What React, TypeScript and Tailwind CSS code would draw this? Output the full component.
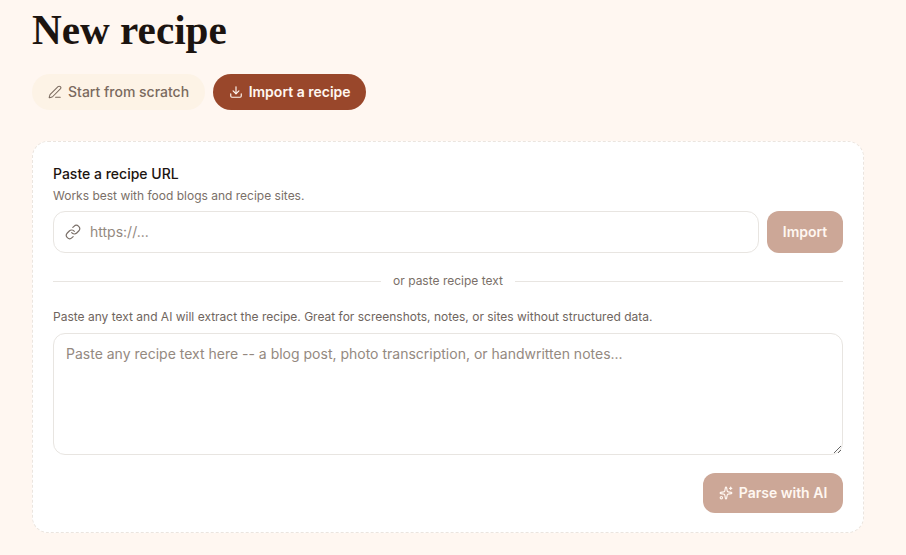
import React from 'react';
import { PenLine, Download, Link, Sparkles } from 'lucide-react';

const App: React.FC = () => {
  return (
    <div className="h-[555px] overflow-hidden bg-[#fff7f1] px-8 pt-[8px] font-['Inter',sans-serif]">
      <h1 className="text-[41.2px] leading-[44px] font-bold text-[#1c1410] font-['Liberation_Serif',serif]">New recipe</h1>

      {/* Mode switch */}
      <div className="mt-[22px] flex gap-2">
        <button className="flex h-9 items-center gap-1.5 rounded-full bg-[#fdf3e6] px-4 text-sm font-medium text-[#7a6a5e]">
          <PenLine size={14} strokeWidth={1.75} />
          Start from scratch
        </button>
        <button className="flex h-9 w-[153px] items-center justify-center gap-1.5 rounded-full bg-[#99472b] text-sm font-semibold text-[#fff7f1]">
          <Download size={14} strokeWidth={2} />
          Import a recipe
        </button>
      </div>

      <div className="mt-[31px] h-[392px] w-[832px] rounded-2xl border border-dashed border-[#ebe5df] bg-white px-5 pt-[22px]">
        <label className="block text-sm leading-5 font-medium text-[#1c1410]">Paste a recipe URL</label>
        <p className="mt-1 text-xs leading-4 text-[#7a6f68]">Works best with food blogs and recipe sites.</p>

        <div className="mt-[7px] flex gap-2">
          <div className="flex h-[42px] flex-1 items-center gap-[9px] rounded-xl border border-[#e8e5e1] bg-white px-[11px]">
            <Link size={16} strokeWidth={1.75} className="text-[#7a6f68]" />
            <input className="flex-1 text-sm outline-none placeholder:text-[#94897f]" placeholder="https://..." />
          </div>
          <button className="h-[42px] w-[76px] rounded-xl bg-[#cca797] text-sm font-semibold text-[#fff7f1]">Import</button>
        </div>

        <div className="mt-[20px] flex items-center gap-3">
          <div className="h-px flex-1 bg-[#e8e5e1]"></div>
          <span className="text-xs leading-4 text-[#7a6f68]">or paste recipe text</span>
          <div className="h-px flex-1 bg-[#e8e5e1]"></div>
        </div>

        <p className="mt-5 text-xs leading-4 text-[#6f655e]">
          Paste any text and AI will extract the recipe. Great for screenshots, notes, or sites without structured data.
        </p>

        <textarea
          className="mt-2 block h-[122px] w-full rounded-xl border border-[#e8e5e1] bg-white px-3 py-[10px] text-sm leading-5 outline-none placeholder:text-[#94897f]"
          placeholder="Paste any recipe text here -- a blog post, photo transcription, or handwritten notes..."
        />

        <div className="mt-[18px] flex justify-end">
          <button className="flex h-10 w-[140px] items-center justify-center gap-[6px] rounded-xl bg-[#cca797] text-sm font-semibold text-[#fff7f1]">
            <Sparkles size={14} strokeWidth={2} />
            Parse with AI
          </button>
        </div>
      </div>
    </div>
  );
};

export default App;
